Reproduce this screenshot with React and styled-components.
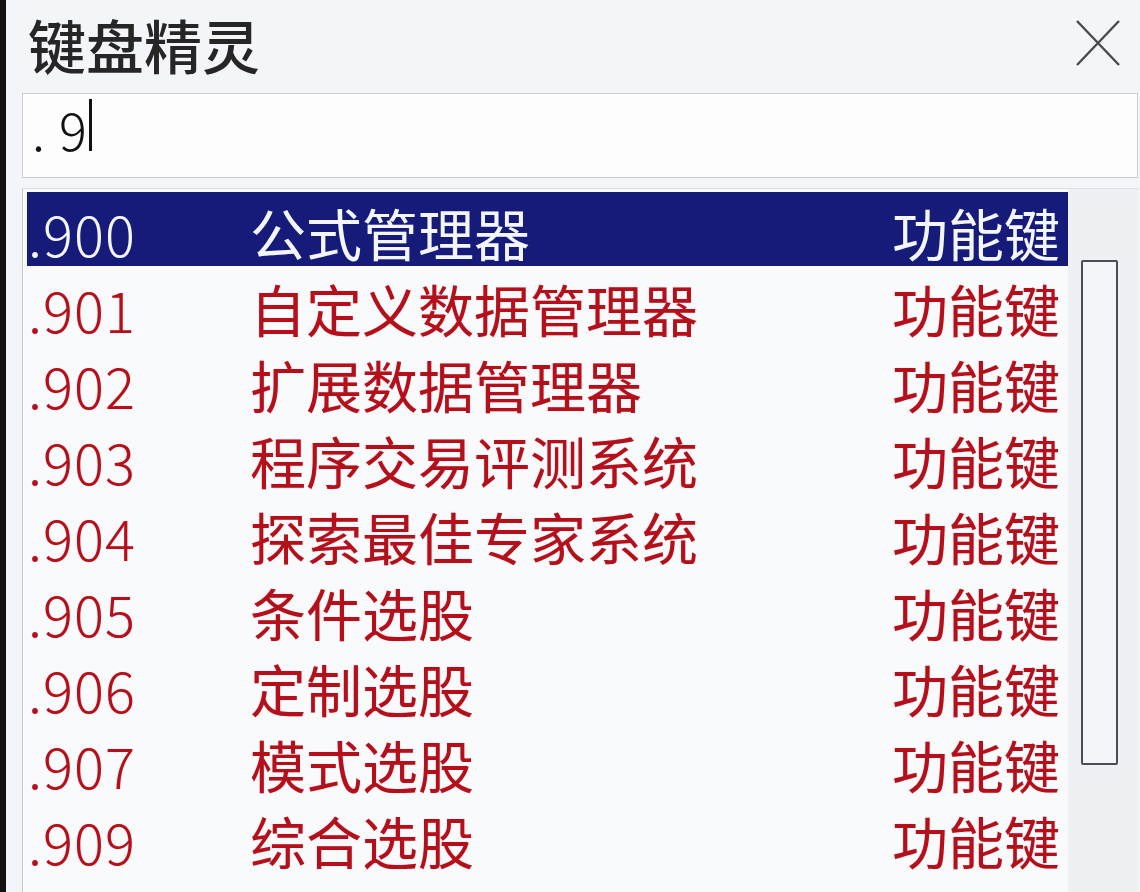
import React from 'react';
import styled, { createGlobalStyle } from 'styled-components';

const GlobalStyle = createGlobalStyle`
  html, body {
    margin: 0;
    padding: 0;
    background: #f3f5f9;
  }
  body {
    font-family: "Noto Sans CJK SC", "Noto Sans", sans-serif;
  }
`;

const rows = [
   { code: '.900', name: '公式管理器', kind: '功能键' },
   { code: '.901', name: '自定义数据管理器', kind: '功能键' },
   { code: '.902', name: '扩展数据管理器', kind: '功能键' },
   { code: '.903', name: '程序交易评测系统', kind: '功能键' },
   { code: '.904', name: '探索最佳专家系统', kind: '功能键' },
   { code: '.905', name: '条件选股', kind: '功能键' },
   { code: '.906', name: '定制选股', kind: '功能键' },
   { code: '.907', name: '模式选股', kind: '功能键' },
   { code: '.909', name: '综合选股', kind: '功能键' },
];

const App = () => {
   return (
      <>
         <GlobalStyle />
         <Screen>
            <Window>
               <TitleBar>
                  <Title>键盘精灵</Title>
                  <CloseButton aria-label="关闭">
                     <svg width="46" height="48" viewBox="0 0 46 48">
                        <path d="M2 2 L44 46 M44 2 L2 46" stroke="#4a4a4a" strokeWidth="2.4" fill="none" />
                     </svg>
                  </CloseButton>
               </TitleBar>

               <SearchBox>
                  <SearchText>.9</SearchText>
                  <Caret />
               </SearchBox>

               <ListBox>
                  <List>
                     {rows.map((row, index) => (
                        <Row key={row.code} selected={index === 0}>
                           <Code>{row.code}</Code>
                           <Name>{row.name}</Name>
                           <Kind>{row.kind}</Kind>
                        </Row>
                     ))}
                  </List>
                  <ScrollTrack>
                     <ScrollThumb />
                  </ScrollTrack>
               </ListBox>
            </Window>
         </Screen>
      </>
   );
};

const Screen = styled.div`
   width: 1140px;
   height: 892px;
   overflow: hidden;
   border-left: 6px solid #141210;
   box-sizing: border-box;
   background: #f3f5f9;
`;

const Window = styled.div`
   display: flex;
   flex-direction: column;
   height: 100%;
`;

const TitleBar = styled.div`
   display: flex;
   align-items: center;
   justify-content: space-between;
   height: 88px;
   padding: 0 19px 0 22px;
   flex-shrink: 0;
`;

const Title = styled.h1`
   margin: 0;
   font-size: 58px;
   font-weight: 500;
   line-height: 1;
   color: #262626;
`;

const CloseButton = styled.div`
   display: flex;
   align-items: center;
   justify-content: center;
   width: 46px;
   height: 48px;
   margin-top: -2px;
`;

const SearchBox = styled.div`
   display: flex;
   align-items: center;
   height: 85px;
   margin: 5px 2px 0 16px;
   padding-left: 9px;
   border: 1px solid #c9ccd3;
   background: #fdfdfe;
   box-sizing: border-box;
   flex-shrink: 0;
`;

const SearchText = styled.span`
   font-size: 52px;
   font-weight: 300;
   line-height: 1;
   color: #111;
   letter-spacing: 14px;
   margin-top: -14px;
`;

const Caret = styled.span`
   width: 3px;
   height: 52px;
   background: #111;
   margin-left: -12px;
   margin-top: -22px;
`;

const ListBox = styled.div`
   display: flex;
   flex: 1;
   margin: 10px 2px 0 16px;
   border-left: 1px solid #c6c9d0;
   border-top: 1px solid #dcdfe5;
   background: #f9fafc;
   min-height: 0;
`;

const List = styled.div`
   flex: 1;
   display: flex;
   flex-direction: column;
   gap: 2px;
   padding: 3px 0 0 4px;
`;

const Row = styled.div`
   display: flex;
   align-items: center;
   height: 74px;
   flex-shrink: 0;
   padding: 0 8px 0 1px;
   font-size: 56px;
   line-height: 1;
   background: ${(p) => (p.selected ? '#161b7a' : 'transparent')};
   color: ${(p) => (p.selected ? '#f4f6ff' : '#b3101c')};
   text-shadow: ${(p) => (p.selected ? 'none' : '0 0 1px rgba(230, 40, 50, 0.35)')};
`;

const Code = styled.span`
   width: 222px;
   flex-shrink: 0;
   font-weight: 300;
   letter-spacing: 1px;
   padding-top: 8px;
`;

const Name = styled.span`
   flex: 1;
   padding-top: 6px;
`;

const Kind = styled.span`
   padding-top: 6px;
`;

const ScrollTrack = styled.div`
   width: 70px;
   flex-shrink: 0;
   background: #eef0f4;
   padding: 71px 0 0 13px;
   box-sizing: border-box;
`;

const ScrollThumb = styled.div`
   width: 37px;
   height: 505px;
   box-sizing: border-box;
   border: 2px solid #4b4d52;
   border-radius: 2px;
   background: #f4f5f8;
`;

export default App;
